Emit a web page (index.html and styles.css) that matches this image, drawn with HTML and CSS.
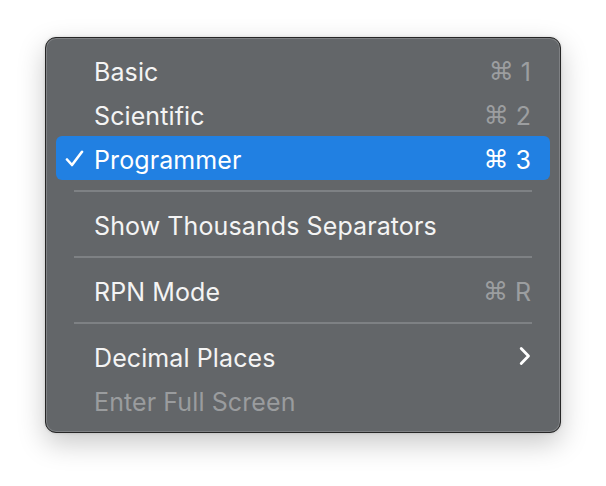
FILE: index.html
```html
<!DOCTYPE html>
<html>
<head>
<meta charset="utf-8">
<link rel="stylesheet" href="styles.css">
</head>
<body>
<div class="stage">
  <div class="menu">
    <div class="item"><span class="check"></span><span class="label">Basic</span><span class="shortcut"><span class="cmd">⌘</span>1</span></div>
    <div class="item"><span class="check"></span><span class="label">Scientific</span><span class="shortcut"><span class="cmd">⌘</span>2</span></div>
    <div class="item selected"><span class="check"><svg width="19" height="17" viewBox="0 0 19 17"><path d="M2 9.5 L7 15 L17 1.8" fill="none" stroke="#fff" stroke-width="2.6" stroke-linecap="round" stroke-linejoin="round"/></svg></span><span class="label">Programmer</span><span class="shortcut"><span class="cmd">⌘</span>3</span></div>
    <div class="sep"></div>
    <div class="item"><span class="check"></span><span class="label">Show Thousands Separators</span></div>
    <div class="sep"></div>
    <div class="item"><span class="check"></span><span class="label">RPN Mode</span><span class="shortcut"><span class="cmd">⌘</span>R</span></div>
    <div class="sep"></div>
    <div class="item"><span class="check"></span><span class="label">Decimal Places</span><span class="arrow"><svg width="12" height="20" viewBox="0 0 12 20"><path d="M2.2 2.5 L9.5 10 L2.2 17.5" fill="none" stroke="#fff" stroke-width="2.8" stroke-linecap="round" stroke-linejoin="round"/></svg></span></div>
    <div class="item disabled"><span class="check"></span><span class="label">Enter Full Screen</span></div>
  </div>
</div>
</body>
</html>
```
FILE: styles.css
```css
html, body {
  margin: 0;
  padding: 0;
  background: #ffffff;
}
.stage {
  width: 606px;
  height: 486px;
  padding: 37px 0 0 45px;
  box-sizing: border-box;
}
.menu {
  width: 516px;
  height: 396px;
  box-sizing: border-box;
  background: #636669;
  border: 1px solid #262626;
  border-radius: 11px;
  box-shadow: inset 0 0 0 1px rgba(255,255,255,0.18), 0 10px 28px rgba(0,0,0,0.22), 0 0 3px rgba(0,0,0,0.15);
  padding: 10px;
  display: flex;
  flex-direction: column;
  font-family: Inter, "Liberation Sans", sans-serif;
  font-size: 25px;
  color: #f4f4f4;
}
.item {
  height: 44px;
  box-sizing: border-box;
  display: flex;
  align-items: center;
  border-radius: 6px;
  padding: 3px 19px 0 9px;
  flex: none;
}
.item.selected {
  background: #2180e2;
  color: #ffffff;
}
.check {
  width: 29px;
  display: flex;
  align-items: center;
  justify-content: flex-start;
  margin-top: -3px;
}
.label {
  flex: 1;
  letter-spacing: 0.1px;
}
.shortcut {
  color: #9c9ea0;
  display: flex;
  align-items: center;
  gap: 7px;
}
.selected .shortcut {
  color: #ffffff;
}
.cmd {
  font-family: "DejaVu Sans", sans-serif;
  font-size: 25px;
}
.arrow {
  display: flex;
  align-items: center;
  margin-top: -3px;
}
.disabled {
  color: #9a9c9e;
}
.sep {
  height: 22px;
  display: flex;
  align-items: center;
  padding: 0 18px 0 18px;
  flex: none;
}
.sep::before {
  content: "";
  display: block;
  flex: 1;
  height: 2px;
  background: #7e8184;
}
```
